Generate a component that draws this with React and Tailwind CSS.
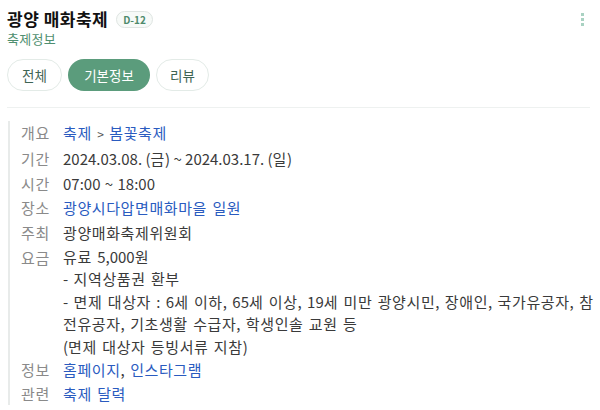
const FONT = { fontFamily: '"Noto Sans CJK KR", "Noto Sans", sans-serif' }

const TABS = [
  { id: 'all', label: '전체', w: 'w-[55px]' },
  { id: 'info', label: '기본정보', w: 'w-[82px]' },
  { id: 'review', label: '리뷰', w: 'w-[53px]' },
]

// hangul runs get a little extra tracking so the width matches the reference font
function T({ children }) {
  const parts = String(children).split(/([가-힣]+)/)
  return parts.map((p, i) =>
    /[가-힣]/.test(p) ? (
      <span key={i} className="tracking-[0.6px]">{p}</span>
    ) : (
      p
    )
  )
}

function Link({ children }) {
  return (
    <span className="text-[#2a5bbf]">
      <T>{children}</T>
    </span>
  )
}

function Row({ label, children, className = '' }) {
  return (
    <div className={`flex ${className}`}>
      <div className="w-[42px] shrink-0 text-[#8a8a8a] leading-[23px]">
        <T>{label}</T>
      </div>
      <div className="flex-1 min-w-0 text-[#3a3a3a] whitespace-nowrap">{children}</div>
    </div>
  )
}

export default function App() {
  const active = 'info'

  return (
    <div className="w-[600px] h-[410px] overflow-hidden bg-white" style={FONT}>
      <div className="px-[7px] pt-[8px]">
        <div className="flex items-center justify-between">
          <div className="flex items-center gap-[8px]">
            <h1 className="text-[17px] font-bold text-[#111] leading-[22px] tracking-[0.5px]">광양 매화축제</h1>
            <span className="h-[17px] px-[6px] flex items-center rounded-full border border-[#dfe5e2] bg-[#f7faf8] text-[10px] font-bold text-[#4e8a6c]">
              D-12
            </span>
          </div>
          <div className="flex flex-col gap-[2px] mr-[9px] mt-[1px]">
            <span className="w-[3px] h-[3px] bg-[#a9d2c2]" />
            <span className="w-[3px] h-[3px] bg-[#a9d2c2]" />
            <span className="w-[3px] h-[3px] bg-[#a9d2c2]" />
          </div>
        </div>
        <div className="text-[13px] text-[#4f8f70] leading-[18px] tracking-[0.3px]">축제정보</div>

        <div className="flex gap-[6px] mt-[11px]">
          {TABS.map((tab) => (
            <button
              key={tab.id}
              className={`${tab.w} h-[32px] rounded-full text-[13.5px] ${
                tab.id === active
                  ? 'bg-[#5b9c7c] text-white'
                  : 'bg-white border border-[#e3ebe7] text-[#3f6454]'
              }`}
            >
              {tab.label}
            </button>
          ))}
        </div>

        <div className="mt-[16px] mr-[3px] h-px bg-[#eef1f0]" />
      </div>

      <div className="mt-[13px] ml-[8px] mr-[10px] border-l-2 border-[#e8ebea] pl-[11px] text-[15px] leading-[23px] [word-spacing:2px] flex flex-col">
        <Row label="개요" className="mb-[1.8px]">
          <Link>축제</Link> <span className="text-[#555] text-[12px]">&gt;</span> <Link>봄꽃축제</Link>
        </Row>
        <Row label="기간" className="mb-[1.8px] [word-spacing:0px]">
          <T>2024.03.08. (금) ~ 2024.03.17. (일)</T>
        </Row>
        <Row label="시간" className="mb-[1.8px] [word-spacing:1px]">07:00 ~ 18:00</Row>
        <Row label="장소" className="mb-[1.8px]">
          <Link>광양시다압면매화마을 일원</Link>
        </Row>
        <Row label="주최" className="mb-[1.8px]">
          <T>광양매화축제위원회</T>
        </Row>
        <Row label="요금" className="leading-[22.5px]">
          <div><T>유료 5,000원</T></div>
          <div><T>- 지역상품권 환부</T></div>
          <div><T>- 면제 대상자 : 6세 이하, 65세 이상, 19세 미만 광양시민, 장애인, 국가유공자, 참</T></div>
          <div><T>전유공자, 기초생활 수급자, 학생인솔 교원 등</T></div>
          <div><T>(면제 대상자 등빙서류 지참)</T></div>
        </Row>
        <Row label="정보" className="mb-[1px]">
          <Link>홈페이지</Link>, <Link>인스타그램</Link>
        </Row>
        <Row label="관련">
          <Link>축제 달력</Link>
        </Row>
      </div>
    </div>
  )
}
